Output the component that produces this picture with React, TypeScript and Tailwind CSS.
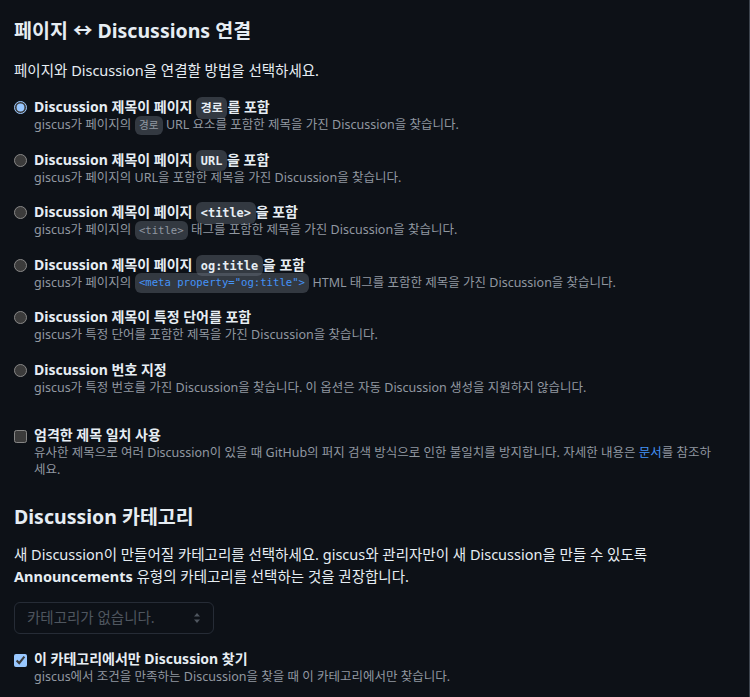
import React from "react";

const font = "font-['Noto_Sans','Noto_Sans_CJK_KR',sans-serif]";

const Code = ({ children, link = false }: { children: React.ReactNode; link?: boolean }) => (
  <code
    className={`font-['DejaVu_Sans_Mono','Liberation_Mono','Noto_Sans_CJK_KR',monospace] text-[85%] leading-none bg-[#6e768166] rounded-[6px] px-[0.4em] py-[0.3em] ${
      link ? "text-[#4493f8]" : ""
    }`}
  >
    {children}
  </code>
);

interface Option {
  label: React.ReactNode;
  desc: React.ReactNode;
}

const options: Option[] = [
  {
    label: (
      <>
        Discussion 제목이 페이지 <Code>경로</Code>를 포함
      </>
    ),
    desc: (
      <>
        giscus가 페이지의 <Code>경로</Code> URL 요소를 포함한 제목을 가진 Discussion을 찾습니다.
      </>
    ),
  },
  {
    label: (
      <>
        Discussion 제목이 페이지 <Code>URL</Code>을 포함
      </>
    ),
    desc: <>giscus가 페이지의 URL을 포함한 제목을 가진 Discussion을 찾습니다.</>,
  },
  {
    label: (
      <>
        Discussion 제목이 페이지 <Code>&lt;title&gt;</Code>을 포함
      </>
    ),
    desc: (
      <>
        giscus가 페이지의 <Code>&lt;title&gt;</Code> 태그를 포함한 제목을 가진 Discussion을 찾습니다.
      </>
    ),
  },
  {
    label: (
      <>
        Discussion 제목이 페이지 <Code>og:title</Code>을 포함
      </>
    ),
    desc: (
      <>
        giscus가 페이지의 <Code link>&lt;meta property="og:title"&gt;</Code> HTML 태그를 포함한 제목을 가진
        Discussion을 찾습니다.
      </>
    ),
  },
  {
    label: <>Discussion 제목이 특정 단어를 포함</>,
    desc: <>giscus가 특정 단어를 포함한 제목을 가진 Discussion을 찾습니다.</>,
  },
  {
    label: <>Discussion 번호 지정</>,
    desc: <>giscus가 특정 번호를 가진 Discussion을 찾습니다. 이 옵션은 자동 Discussion 생성을 지원하지 않습니다.</>,
  },
];

export default function App() {
  return (
    <div className={`${font} [color-scheme:dark] bg-[#0d1117] text-[#e6edf3] min-h-[697px] border-r border-[#3d444d]`}>
      <div className="pl-[14px] pr-[30px] pt-[17px] pb-4">
        <h3 className="text-[19.5px] font-bold leading-[28px]">페이지 ↔ Discussions 연결</h3>
        <p className="text-[14.5px] leading-[21px] mt-[15px]">페이지와 Discussion을 연결할 방법을 선택하세요.</p>

        <div className="mt-[16px] flex flex-col gap-[15.5px]">
          {options.map((o, i) => (
            <label key={i} className="flex items-start gap-[7px]">
              <input
                type="radio"
                name="mapping"
                defaultChecked={i === 0}
                className="w-[13px] h-[13px] mt-[4px] m-0 shrink-0"
              />
              <div className="flex flex-col">
                <span className="text-[14px] font-bold leading-[19px]">{o.label}</span>
                <span className="text-[12.5px] text-[#9198a1] leading-[18px]">{o.desc}</span>
              </div>
            </label>
          ))}
        </div>

        <label className="flex items-start gap-[7px] mt-[28px]">
          <input type="checkbox" className="w-[13px] h-[13px] mt-[5px] m-0 shrink-0" />
          <div className="flex flex-col">
            <span className="text-[14px] font-bold leading-[19px]">엄격한 제목 일치 사용</span>
            <span className="text-[12.5px] text-[#9198a1] leading-[17px]">
              유사한 제목으로 여러 Discussion이 있을 때 GitHub의 퍼지 검색 방식으로 인한 불일치를 방지합니다. 자세한
              내용은 <a className="text-[#4493f8]">문서</a>를 참조하세요.
            </span>
          </div>
        </label>

        <h3 className="text-[19.5px] font-bold leading-[28px] mt-[25px]">Discussion 카테고리</h3>
        <p className="text-[14.5px] leading-[22px] mt-[12px]">
          새 Discussion이 만들어질 카테고리를 선택하세요. giscus와 관리자만이 새 Discussion을 만들 수 있도록{" "}
          <strong>Announcements</strong> 유형의 카테고리를 선택하는 것을 권장합니다.
        </p>

        <div className="mt-[15px] w-[200px] h-[32px] rounded-[6px] border border-[#262c36] flex items-center justify-between px-[12px]">
          <span className="text-[14.5px] text-[#4f565f]">카테고리가 없습니다.</span>
          <svg width="8" height="12" viewBox="0 0 8 12" className="text-[#4f565f]">
            <path d="M4 1 L7 4.5 H1 Z" fill="currentColor" />
            <path d="M4 11 L7 7.5 H1 Z" fill="currentColor" />
          </svg>
        </div>

        <label className="flex items-start gap-[7px] mt-[15px]">
          <input type="checkbox" defaultChecked className="w-[13px] h-[13px] mt-[5px] m-0 shrink-0" />
          <div className="flex flex-col">
            <span className="text-[14px] font-bold leading-[19px]">이 카테고리에서만 Discussion 찾기</span>
            <span className="text-[12.5px] text-[#9198a1] leading-[18px]">
              giscus에서 조건을 만족하는 Discussion을 찾을 때 이 카테고리에서만 찾습니다.
            </span>
          </div>
        </label>
      </div>
    </div>
  );
}
